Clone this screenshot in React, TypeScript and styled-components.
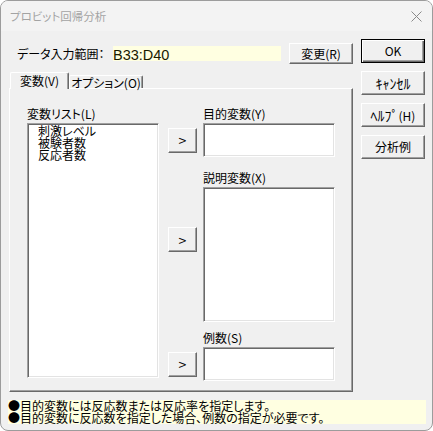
import styled, { createGlobalStyle } from "styled-components"

const GlobalStyle = createGlobalStyle`
body {
    margin: 0;
    background: #ffffff;
    font-family: "Noto Sans CJK JP", "Liberation Sans", sans-serif;
    font-size: 12px;
    font-feature-settings: "palt";
    color: #000;
}
* {
    box-sizing: border-box;
}
`

const Window = styled.div`
width: 433px;
height: 431px;
border: 1px solid #9c9c9c;
border-radius: 8px;
background: #f0f0f0;
overflow: hidden;
display: flex;
flex-direction: column;
`

const TitleBar = styled.div`
height: 30px;
flex: none;
display: flex;
align-items: center;
justify-content: space-between;
padding: 0 10px 0 9px;
background: #f3f3f3;
color: #a3a3a3;
font-size: 11.5px;
line-height: 14px;
`

const Body = styled.div`
display: flex;
gap: 8px;
padding-left: 8px;
`

const LeftColumn = styled.div`
width: 344px;
display: flex;
flex-direction: column;
`

const RangeRow = styled.div`
margin-top: 12px;
height: 21px;
display: flex;
align-items: center;
`

const RangeLabel = styled.div`
width: 104px;
padding-left: 8px;
line-height: 14px;
white-space: nowrap;
`

const RangeField = styled.div`
width: 168px;
height: 15px;
background: #ffffe1;
font-family: "Liberation Sans", Arial, sans-serif;
font-size: 14.5px;
line-height: 16px;
color: #1a1a00;
padding-top: 1px;
`

const Button = styled.button<{ $default?: boolean; $w?: number; $h?: number }>`
width: ${({ $w }) => $w ?? 64}px;
height: ${({ $h }) => $h ?? 24}px;
padding: 0;
background: #f0f0f0;
font-family: inherit;
font-feature-settings: normal;
font-size: 12px;
line-height: 14px;
color: #000;
white-space: nowrap;
border: 1px solid;
border-color: ${({ $default }) => ($default ? "#000" : "#fff #696969 #696969 #fff")};
box-shadow: ${({ $default }) =>
    $default
        ? "inset 1px 1px #fff, inset -1px -1px #696969, inset -2px -2px #a0a0a0"
        : "inset -1px -1px #a0a0a0"};
flex: none;
`

// half-width katakana reads small in Noto, bump it a little
const Kana = styled.span`
font-size: 14px;
`

const RangeButton = styled(Button)`
margin-left: 8px;
height: 21px;
`

const TabStrip = styled.div`
margin-top: 8px;
height: 16px;
display: flex;
align-items: flex-end;
position: relative;
z-index: 1;
`

const Tab = styled.div<{ $active?: boolean; $w: number }>`
width: ${({ $w }) => $w}px;
height: ${({ $active }) => ($active ? 17 : 13)}px;
margin-bottom: ${({ $active }) => ($active ? -1 : 0)}px;
margin-left: ${({ $active }) => ($active ? 1 : 0)}px;
background: #f0f0f0;
border-top: 1px solid #fff;
border-left: 1px solid #fff;
border-right: 1px solid #696969;
box-shadow: inset -1px 0 #a0a0a0;
border-radius: 2px 2px 0 0;
display: flex;
align-items: ${({ $active }) => ($active ? "flex-start" : "center")};
justify-content: center;
padding-top: ${({ $active }) => ($active ? 1 : 0)}px;
line-height: 13px;
white-space: nowrap;
`

const Panel = styled.div`
height: 304px;
border-top: 1px solid #fff;
border-left: 1px solid #fff;
border-right: 1px solid #696969;
border-bottom: 1px solid #696969;
box-shadow: inset -1px -1px #a0a0a0;
padding: 18px 0 0 17px;
display: flex;
`

const ListColumn = styled.div`
display: flex;
flex-direction: column;
gap: 3px;
`

const Label = styled.div`
height: 13px;
line-height: 13px;
white-space: nowrap;
`

const Sunken = styled.div<{ $h: number }>`
width: 132px;
height: ${({ $h }) => $h}px;
background: #fff;
border: 1px solid;
border-color: #a0a0a0 #fff #fff #a0a0a0;
box-shadow: inset 1px 1px #696969, inset -1px -1px #e3e3e3;
`

const ListBox = styled(Sunken)`
padding: 1px 0 0 10px;
line-height: 12px;
`

const FieldsColumn = styled.div`
margin-left: 9px;
display: flex;
flex-direction: column;
`

const FieldGroup = styled.div<{ $top: number }>`
margin-top: ${({ $top }) => $top}px;
display: grid;
grid-template-columns: 29px 132px;
column-gap: 6px;
row-gap: 3px;
`

const ArrowButton = styled(Button)<{ $offset?: number }>`
grid-column: 1;
grid-row: 2;
align-self: ${({ $offset }) => ($offset === undefined ? "center" : "start")};
margin-top: ${({ $offset }) => $offset ?? 0}px;
font-size: 14px;
`

const GroupLabel = styled(Label)`
grid-column: 2;
grid-row: 1;
`

const GroupBox = styled(Sunken)`
grid-column: 2;
grid-row: 2;
`

const RightColumn = styled.div`
margin-top: 8px;
display: flex;
flex-direction: column;
gap: 8px;
`

const Footer = styled.div`
margin: 8px 0 0 7px;
width: 418px;
height: 24px;
background: #ffffe1;
line-height: 12px;
font-size: 12px;
white-space: nowrap;
`

const groups = [
    { label: "目的変数(Y)", top: 0, h: 34 },
    { label: "説明変数(X)", top: 14, h: 135, offset: 40 },
    { label: "例数(S)", top: 9, h: 34 },
]

export default function App() {
    const variables = ["刺激レベル", "被験者数", "反応者数"]

    return (
        <>
            <GlobalStyle />
            <Window>
                <TitleBar>
                    <span>プロビット回帰分析</span>
                    <svg width="11" height="11" viewBox="0 0 11 11">
                        <path d="M0.5 0.5 L10.5 10.5 M10.5 0.5 L0.5 10.5" stroke="#8a8a8a" strokeWidth="1" />
                    </svg>
                </TitleBar>
                <Body>
                    <LeftColumn>
                        <RangeRow>
                            <RangeLabel>データ入力範囲：</RangeLabel>
                            <RangeField>B33:D40</RangeField>
                            <RangeButton>変更(R)</RangeButton>
                        </RangeRow>
                        <TabStrip>
                            <Tab $active $w={59}>変数(V)</Tab>
                            <Tab $w={74}>オプション(O)</Tab>
                        </TabStrip>
                        <Panel>
                            <ListColumn>
                                <Label>変数リスト(L)</Label>
                                <ListBox $h={255}>
                                    {variables.map((v, i) => (
                                        <div key={i}>{v}</div>
                                    ))}
                                </ListBox>
                            </ListColumn>
                            <FieldsColumn>
                                {groups.map((g, i) => (
                                    <FieldGroup key={i} $top={g.top}>
                                        <GroupLabel>{g.label}</GroupLabel>
                                        <ArrowButton $w={29} $h={25} $offset={g.offset}>&gt;</ArrowButton>
                                        <GroupBox $h={g.h} />
                                    </FieldGroup>
                                ))}
                            </FieldsColumn>
                        </Panel>
                    </LeftColumn>
                    <RightColumn>
                        <Button $default>OK</Button>
                        <Button><Kana>ｷｬﾝｾﾙ</Kana></Button>
                        <Button><Kana>ﾍﾙﾌﾟ</Kana>(H)</Button>
                        <Button>分析例</Button>
                    </RightColumn>
                </Body>
                <Footer>
                    <div>●目的変数には反応数または反応率を指定します。</div>
                    <div>●目的変数に反応数を指定した場合、例数の指定が必要です。</div>
                </Footer>
            </Window>
        </>
    )
}
